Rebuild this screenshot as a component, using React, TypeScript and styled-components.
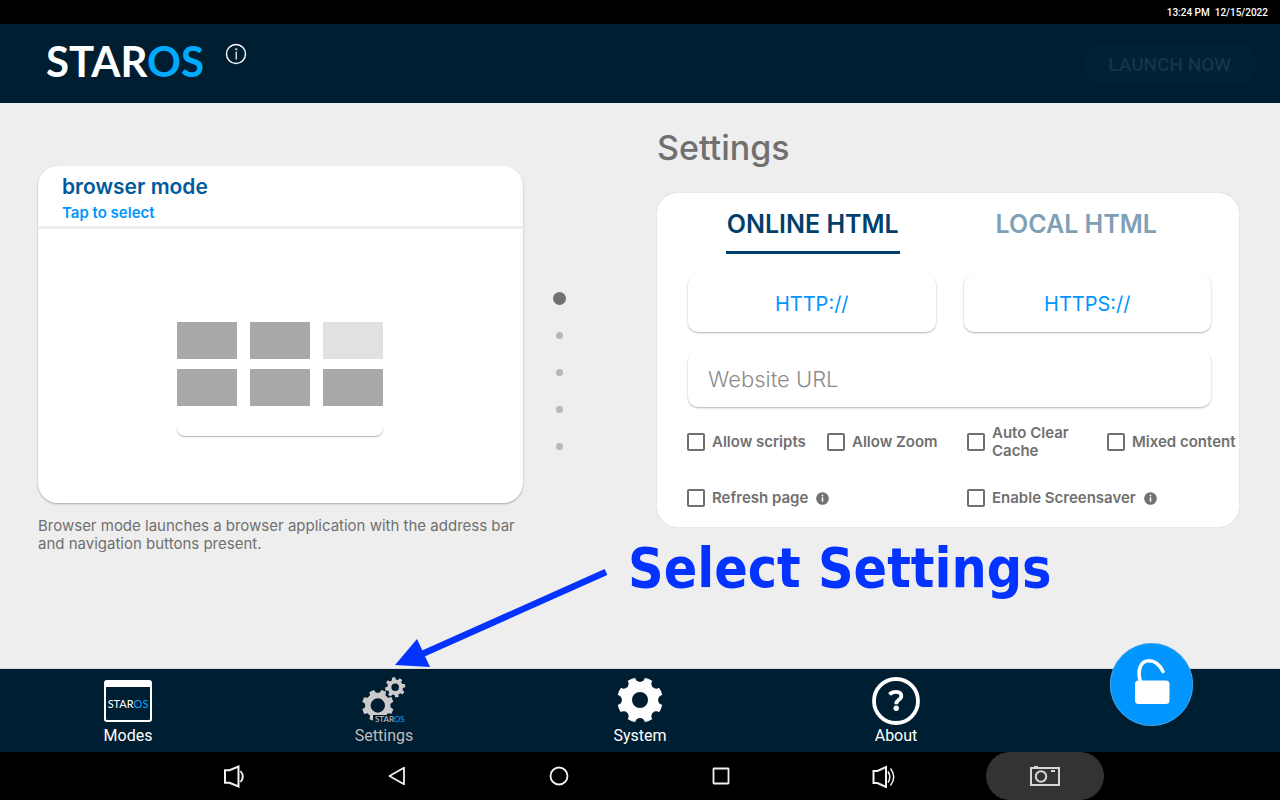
import React, { useState } from "react";
import styled, { createGlobalStyle } from "styled-components";

const GlobalStyle = createGlobalStyle`
  * { box-sizing: border-box; }
  html, body { margin: 0; padding: 0; }
  body { background: #eeeeee; font-family: Inter, "Liberation Sans", sans-serif; }
  button { font-family: inherit; border: 0; margin: 0; padding: 0; background: none; cursor: pointer; }
  svg { display: block; }
`;

const NAVY = "#001e32";
const GREY = "#707070";
const BLUE = "#0095ff";

const Screen = styled.div`
  min-height: 100vh;
  display: flex;
  flex-direction: column;
`;

const StatusBar = styled.div`
  height: 24px;
  padding: 2px 12px 0;
  display: flex;
  justify-content: flex-end;
  align-items: center;
  gap: 5px;
  background: #000;
  color: #fff;
  font: 500 10px/16px Roboto, sans-serif;
`;

const Header = styled.header`
  height: 79px;
  padding: 0 24px 0 46px;
  display: flex;
  align-items: center;
  background: ${NAVY};
`;

const Wordmark = styled.span<{ $size: number; $weight: number; $tone?: string }>`
  display: block;
  font: ${(p) => p.$weight} ${(p) => p.$size}px/1 Lato, sans-serif;
  color: ${(p) => p.$tone ?? "#fff"};
  white-space: nowrap;
  b { font-weight: inherit; color: #00aaff; }
`;

const Logo = styled.div`
  padding-bottom: 5px;
`;

const HeaderInfo = styled.button`
  margin: 0 auto 20px 21px;
`;

const LaunchButton = styled.button`
  height: 41px;
  padding: 2px 25px 0;
  border-radius: 20px;
  background: #002236;
  color: #17344a;
  font: 500 19px/24px Roboto, sans-serif;
`;

const Main = styled.main`
  flex: 1;
  display: grid;
  grid-template-columns: 1fr 1fr;
  border-bottom: 1px solid #dcdcdc;
`;

const ModePane = styled.section`
  display: flex;
  align-items: flex-start;
  padding: 63px 44px 0 38px;
`;

const ModeColumn = styled.div`
  flex: 1;
  min-width: 0;
`;

const ModeCard = styled.article`
  overflow: hidden;
  border-radius: 20px;
  background: #fff;
  box-shadow: 0 1px 2px rgba(0, 0, 0, 0.3);
`;

const ModeHead = styled.div`
  height: 63px;
  padding: 8px 24px 0;
  border-bottom: 3px solid #eeeeee;
`;

const ModeTitle = styled.h2`
  margin: 0;
  color: #005a9b;
  font-size: 21px;
  line-height: 26px;
  font-weight: 600;
`;

const TapLink = styled.button`
  display: block;
  margin-top: 4px;
  color: ${BLUE};
  font-size: 15px;
  line-height: 18px;
  font-weight: 600;
`;

const Preview = styled.div`
  height: 274px;
  padding: 93px 1px 0 0;
  display: flex;
  flex-direction: column;
  align-items: center;
  gap: 15px;
`;

const Tiles = styled.div`
  display: grid;
  grid-template-columns: repeat(3, 60px);
  gap: 10px 13px;
`;

const Tile = styled.div<{ $light?: boolean }>`
  height: 37px;
  background: ${(p) => (p.$light ? "#e1e1e1" : "#a9a9a9")};
`;

const PreviewBar = styled.div`
  width: 206px;
  height: 15px;
  border-radius: 8px;
  background: #fff;
  box-shadow: 0 1px 1px rgba(0, 0, 0, 0.3);
`;

const ModeText = styled.p`
  margin: 14px 0 0;
  color: ${GREY};
  font-size: 15px;
  line-height: 18px;
  font-weight: 400;
`;

const Dots = styled.nav`
  width: 73px;
  margin-top: 114px;
  display: flex;
  flex-direction: column;
  align-items: center;
`;

const DotButton = styled.button<{ $on?: boolean }>`
  height: 37px;
  width: 37px;
  display: grid;
  place-items: center;
  &::before {
    content: "";
    width: ${(p) => (p.$on ? 13 : 7)}px;
    height: ${(p) => (p.$on ? 13 : 7)}px;
    border-radius: 50%;
    background: ${(p) => (p.$on ? GREY : "#b7b7b7")};
  }
`;

const SettingsPane = styled.section`
  padding: 25px 41px 0 17px;
`;

const PaneTitle = styled.h1`
  margin: 0 0 25px;
  color: ${GREY};
  font-size: 34px;
  line-height: 40px;
  font-weight: 500;
`;

const SettingsCard = styled.div`
  padding-bottom: 20px;
  border-radius: 20px;
  background: #fff;
  box-shadow: 0 0 1px rgba(0, 0, 0, 0.25);
`;

const Tabs = styled.div`
  display: grid;
  grid-template-columns: 1fr 1fr;
  justify-items: center;
  padding: 16px 31px 0 24px;
`;

const Tab = styled.button<{ $on: boolean }>`
  padding: 0 1px 12px;
  border-bottom: 3px solid ${(p) => (p.$on ? "#003f6b" : "transparent")};
  color: ${(p) => (p.$on ? "#003f6b" : "#7f9fb5")};
  font-size: 25px;
  line-height: 30px;
  font-weight: 600;
  white-space: nowrap;
`;

const Fields = styled.div`
  display: grid;
  grid-template-columns: 1fr 1fr;
  gap: 19px 28px;
  padding: 20px 28px 0 31px;
`;

const raised = `
  border: 0;
  border-radius: 10px;
  background: #fff;
  box-shadow: 0 1px 2px rgba(0, 0, 0, 0.3);
`;

const SchemeButton = styled.button`
  ${raised}
  height: 58px;
  padding-top: 2px;
  color: ${BLUE};
  font-size: 20px;
  line-height: 26px;
`;

const UrlInput = styled.input`
  ${raised}
  grid-column: 1 / -1;
  min-width: 0;
  height: 56px;
  padding: 0 20px;
  color: ${GREY};
  font: 300 22px/26px Inter, sans-serif;
  &::placeholder { color: #8c8c8c; opacity: 1; }
`;

const Options = styled.div<{ $columns: number; $top: number }>`
  display: grid;
  grid-template-columns: repeat(${(p) => p.$columns}, 1fr);
  align-items: center;
  padding: ${(p) => p.$top}px 0 0 30px;
  margin-right: -8px;
`;

const Option = styled.div`
  display: flex;
  align-items: center;
  gap: 8px;
`;

const Check = styled.label`
  display: flex;
  align-items: center;
  gap: 7px;
  color: ${GREY};
  font-size: 15px;
  line-height: 18px;
  font-weight: 600;
`;

const Box = styled.input`
  appearance: none;
  flex: none;
  width: 18px;
  height: 18px;
  margin: 0;
  border: 2px solid ${GREY};
  border-radius: 2px;
  &:checked { background: ${GREY}; }
`;

const BottomNav = styled.nav`
  height: 83px;
  display: grid;
  grid-template-columns: repeat(5, 1fr);
  background: ${NAVY};
`;

const NavItem = styled.button<{ $on?: boolean }>`
  display: flex;
  flex-direction: column;
  align-items: center;
  justify-content: flex-end;
  gap: 1px;
  padding-bottom: 6px;
  color: ${(p) => (p.$on ? "#bdbdbd" : "#fff")};
  font: 400 16px/20px Roboto, sans-serif;
`;

const IconArea = styled.span`
  height: 48px;
  display: flex;
  align-items: center;
`;

const WindowIcon = styled.span`
  width: 48px;
  height: 42px;
  display: flex;
  align-items: center;
  justify-content: center;
  border: solid #fff;
  border-width: 7px 2px 2px;
  border-radius: 3px;
`;

const GearsIcon = styled.span`
  position: relative;
  width: 48px;
  height: 48px;
`;

const GearsBrand = styled.span`
  position: absolute;
  left: 13px;
  top: 38px;
  padding-left: 2px;
  background: ${NAVY};
`;

const LockCell = styled.div`
  position: relative;
`;

const LockButton = styled.button`
  position: absolute;
  left: 50%;
  top: -26px;
  margin-left: -42px;
  width: 83px;
  height: 83px;
  border-radius: 50%;
  background: ${BLUE};
`;

const SystemBar = styled.nav`
  height: 48px;
  display: flex;
  justify-content: center;
  background: #000;
`;

const SystemCell = styled.div`
  width: 162px;
  display: flex;
  align-items: center;
  justify-content: center;
`;

const SystemButton = styled.button<{ $pill?: boolean }>`
  width: ${(p) => (p.$pill ? 118 : 48)}px;
  height: 48px;
  display: grid;
  place-items: center;
  border-radius: 24px;
  background: ${(p) => (p.$pill ? "#333333" : "none")};
`;

const Callout = styled.p`
  position: absolute;
  left: 628px;
  top: 536px;
  margin: 0;
  color: #0433ff;
  font: bold 55px/64px "DejaVu Sans Condensed", "DejaVu Sans", sans-serif;
  white-space: nowrap;
`;

const Arrow = styled.svg`
  position: absolute;
  left: 390px;
  top: 560px;
`;

function gearPath(cx: number, cy: number, outer: number, inner: number, hole: number, teeth: number, turn: number) {
  const step = (Math.PI * 2) / teeth;
  const at = (r: number, a: number) =>
    `${(cx + r * Math.cos(a)).toFixed(2)} ${(cy + r * Math.sin(a)).toFixed(2)}`;
  const points: string[] = [];
  for (let i = 0; i < teeth; i++) {
    const a = turn + i * step;
    points.push(at(inner, a - step * 0.32), at(outer, a - step * 0.2), at(outer, a + step * 0.2), at(inner, a + step * 0.32));
  }
  return `M${points.join("L")}Z M${cx - hole} ${cy}a${hole} ${hole} 0 1 0 ${hole * 2} 0a${hole} ${hole} 0 1 0 ${-hole * 2} 0Z`;
}

function Brand({ size, weight, tone }: { size: number; weight: number; tone?: string }) {
  return (
    <Wordmark $size={size} $weight={weight} $tone={tone}>
      STAR<b>OS</b>
    </Wordmark>
  );
}

function SmallInfo() {
  return (
    <svg width="13" height="13" viewBox="0 0 13 13" aria-hidden="true">
      <circle cx="6.5" cy="6.5" r="6.3" fill={GREY} />
      <path d="M6.5 5.4v4.400" stroke="#fff" strokeWidth="1.500" fill="none" />
      <circle cx="6.500" cy="3.500" r="0.900" fill="#fff" />
    </svg>
  );
}

function SystemGear() {
  return (
    <svg width="46" height="48" viewBox="-23 -23 46 48" aria-hidden="true">
      <mask id="notches">
        <circle r="22.8" fill="#fff" />
        <circle r="8" fill="#000" />
        {[0, 45, 90, 135, 180, 225, 270, 315].map((a) => (
          <circle key={a} cx="23" cy="0" r="4.9" fill="#000" transform={`rotate(${a})`} />
        ))}
      </mask>
      <rect x="-23" y="-23" width="46" height="46" fill="#fff" mask="url(#notches)" />
    </svg>
  );
}

function SystemIcon({ name }: { name: string }) {
  const common = { width: 24, height: 24, viewBox: "0 0 24 24", fill: "none", stroke: "#f2f2f2", strokeWidth: 1.8, "aria-hidden": true };
  if (name === "Volume down")
    return (
      <svg {...common}>
        <path d="M2 6.200h4.500L15.500 2.500v20L6.500 18.800H2Z" strokeWidth="2" />
        <path d="M17.500 7q4.600 5.500 0 11" />
      </svg>
    );
  if (name === "Back")
    return (
      <svg {...common}>
        <path d="M4.500 12L19 3.800v16.400Z" strokeLinejoin="round" />
      </svg>
    );
  if (name === "Home")
    return (
      <svg {...common}>
        <circle cx="12" cy="12" r="8.500" />
      </svg>
    );
  if (name === "Recents")
    return (
      <svg {...common}>
        <rect x="4.500" y="4.500" width="15" height="15" rx="0.500" />
      </svg>
    );
  if (name === "Volume up")
    return (
      <svg {...common}>
        <path d="M2.500 7h4L15 3v20L6.500 19H2.500Z" strokeWidth="2" />
        <path d="M17 7.500q3.600 5.500 0 11M19.500 4.500q6.500 8.500 0 17" strokeWidth="1.500" />
      </svg>
    );
  return (
    <svg width="30" height="20" viewBox="0 0 30 20" fill="none" stroke="#d6d6d6" strokeWidth="2" aria-hidden="true">
      <rect x="1" y="2" width="28" height="17" />
      <path d="M4 0.800h4" />
      <path d="M21 5h4" />
      <circle cx="11" cy="10.500" r="5.200" />
    </svg>
  );
}

export default function App() {
  const [tab, setTab] = useState("ONLINE HTML");
  return (
    <Screen>
      <GlobalStyle />
      <StatusBar>
        <span>13:24 PM</span>
        <span>12/15/2022</span>
      </StatusBar>
      <Header>
        <Logo><Brand size={42} weight={700} /></Logo>
        <HeaderInfo aria-label="Information">
          <svg width="22" height="22" viewBox="0 0 22 22" fill="none" stroke="#fff" aria-hidden="true">
            <circle cx="11" cy="11" r="9.500" strokeWidth="1.400" />
            <path d="M11.200 8.500v8" strokeWidth="1.200" />
            <path d="M10 6.200h2.400" strokeWidth="1.200" />
          </svg>
        </HeaderInfo>
        <LaunchButton>LAUNCH NOW</LaunchButton>
      </Header>
      <Main>
        <ModePane>
          <ModeColumn>
            <ModeCard>
              <ModeHead>
                <ModeTitle>browser mode</ModeTitle>
                <TapLink>Tap to select</TapLink>
              </ModeHead>
              <Preview>
                <Tiles>
                  {[0, 1, 2, 3, 4, 5].map((i) => (
                    <Tile key={i} $light={i === 2} />
                  ))}
                </Tiles>
                <PreviewBar />
              </Preview>
            </ModeCard>
            <ModeText>Browser mode launches a browser application with the address bar and navigation buttons present.</ModeText>
          </ModeColumn>
          <Dots aria-label="Mode pages">
            {[1, 2, 3, 4, 5].map((n) => (
              <DotButton key={n} $on={n === 1} aria-label={`Mode ${n}`} />
            ))}
          </Dots>
        </ModePane>
        <SettingsPane>
          <PaneTitle>Settings</PaneTitle>
          <SettingsCard>
            <Tabs>
              {["ONLINE HTML", "LOCAL HTML"].map((t) => (
                <Tab key={t} $on={tab === t} onClick={() => setTab(t)}>
                  {t}
                </Tab>
              ))}
            </Tabs>
            <Fields>
              <SchemeButton>HTTP://</SchemeButton>
              <SchemeButton>HTTPS://</SchemeButton>
              <UrlInput type="text" placeholder="Website URL" aria-label="Website URL" />
            </Fields>
            <Options $columns={4} $top={17}>
              <Check><Box type="checkbox" />Allow scripts</Check>
              <Check><Box type="checkbox" />Allow Zoom</Check>
              <Check><Box type="checkbox" /><span>Auto Clear<br />Cache</span></Check>
              <Check><Box type="checkbox" />Mixed content</Check>
            </Options>
            <Options $columns={2} $top={29}>
              <Option>
                <Check><Box type="checkbox" />Refresh page</Check>
                <SmallInfo />
              </Option>
              <Option>
                <Check><Box type="checkbox" />Enable Screensaver</Check>
                <SmallInfo />
              </Option>
            </Options>
          </SettingsCard>
        </SettingsPane>
      </Main>
      <BottomNav>
        <NavItem>
          <IconArea>
            <WindowIcon><Brand size={11} weight={400} /></WindowIcon>
          </IconArea>
          Modes
        </NavItem>
        <NavItem $on>
          <GearsIcon>
            <svg width="48" height="48" viewBox="0 0 48 48" fill="#cccaca" fillRule="evenodd" aria-hidden="true">
              <path d={gearPath(17.8, 28.5, 16, 12.8, 7.2, 8, 0.39)} />
              <path d={gearPath(35.2, 10.3, 10.2, 7.8, 3.8, 8, -0.175)} />
            </svg>
            <GearsBrand><Brand size={8} weight={400} tone="#cccaca" /></GearsBrand>
          </GearsIcon>
          Settings
        </NavItem>
        <NavItem>
          <IconArea><SystemGear /></IconArea>
          System
        </NavItem>
        <NavItem>
          <svg width="48" height="48" viewBox="0 0 48 48" fill="none" stroke="#fff" aria-hidden="true">
            <circle cx="24" cy="24" r="22" strokeWidth="3.800" />
            <path d="M17.500 17.500Q20 14.800 24 14.800Q29.300 14.800 29.300 19Q29.300 21.200 26.600 23Q24.200 24.600 24.200 27.200" strokeWidth="3.800" />
            <circle cx="24.200" cy="31.200" r="2.700" fill="#fff" stroke="none" />
          </svg>
          About
        </NavItem>
        <LockCell>
          <LockButton aria-label="Unlock">
            <svg width="83" height="83" viewBox="0 0 83 83" fill="none" aria-hidden="true">
              <circle cx="41.500" cy="41.500" r="41.200" stroke="#7fb8e0" strokeWidth="0.600" />
              <rect x="25" y="37.500" width="34.500" height="23.500" rx="3.500" fill="#fff" />
              <path d="M30.500 39C27 27 30.500 17.800 39 17.800C45.500 17.800 50 22.500 53 28.500" stroke="#fff" strokeWidth="3.600" strokeLinecap="round" />
            </svg>
          </LockButton>
        </LockCell>
      </BottomNav>
      <SystemBar>
        {["Volume down", "Back", "Home", "Recents", "Volume up", "Screenshot"].map((name) => (
          <SystemCell key={name}>
            <SystemButton aria-label={name} $pill={name === "Screenshot"}>
              <SystemIcon name={name} />
            </SystemButton>
          </SystemCell>
        ))}
      </SystemBar>
      <Arrow width="220" height="110" viewBox="0 0 220 110" aria-hidden="true">
        <path d="M216 12L30 95" stroke="#0433ff" strokeWidth="6.500" />
        <path d="M5 105L27 79L40 107Z" fill="#0433ff" />
      </Arrow>
      <Callout>Select Settings</Callout>
    </Screen>
  );
}
